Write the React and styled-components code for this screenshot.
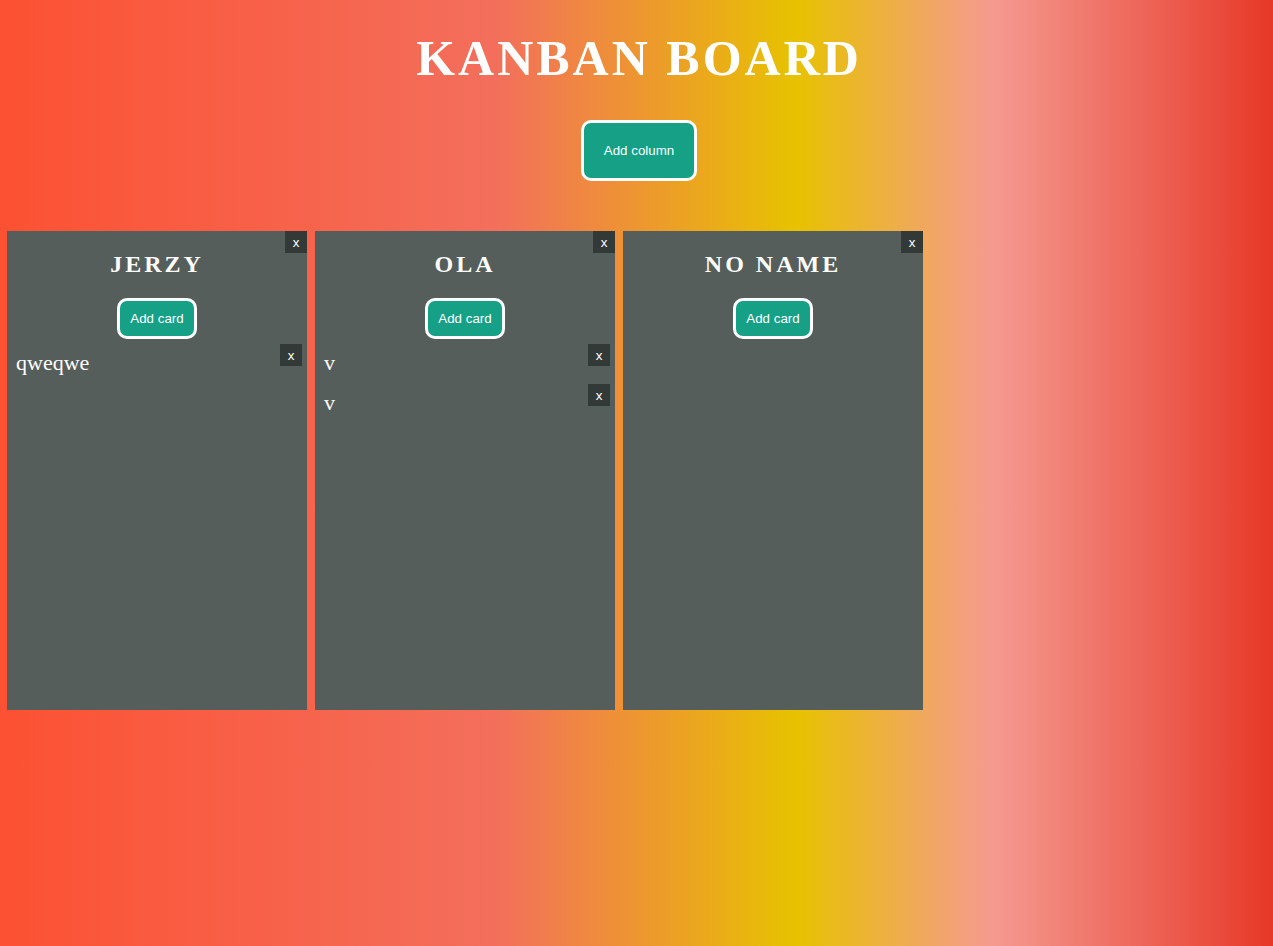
import React, { useState } from "react";
import styled, { createGlobalStyle } from "styled-components";

const GlobalStyle = createGlobalStyle`
  * {
    box-sizing: border-box;
  }

  body {
    margin: 0;
    min-height: 100vh;
    color: #fff;
    font-family: "Liberation Serif", "Times New Roman", serif;
    background: linear-gradient(
      to right,
      #fc5132 0%,
      #f36f5c 39%,
      #e7c200 62.5%,
      #f59a90 78%,
      #e73827 100%
    );
  }
`;

const Header = styled.header`
  display: flex;
  flex-direction: column;
  align-items: center;
  gap: 34px;
  padding: 30px 0 50px 5px;
`;

const Title = styled.h1`
  margin: 0;
  font-size: 50px;
  line-height: 56px;
  letter-spacing: 3px;
  text-transform: uppercase;
`;

const AddButton = styled.button`
  padding: ${({ $large }) => ($large ? "20px" : "10px")};
  border: 3px solid #fff;
  border-radius: 10px;
  background: #16a085;
  color: #fff;
  font-family: "Liberation Sans", Arial, sans-serif;
  cursor: pointer;
`;

const Board = styled.main`
  display: flex;
  flex-wrap: wrap;
  gap: 8px;
  padding: 0 7px;
`;

const ColumnBox = styled.section`
  position: relative;
  display: flex;
  flex-direction: column;
  align-items: center;
  width: 300px;
  min-height: 479px;
  padding: 20px 5px;
  background: #555e5b;
`;

const ColumnTitle = styled.h2`
  margin: 0 0 20px;
  font-size: 24px;
  line-height: 27px;
  letter-spacing: 3px;
  text-transform: uppercase;
`;

const CardList = styled.ul`
  align-self: stretch;
  margin: 5px 0 0;
  padding: 0;
  list-style: none;
`;

const CardItem = styled.li`
  display: flex;
  align-items: flex-start;
  justify-content: space-between;
  min-height: 40px;
  padding-left: 4px;
`;

const CardText = styled.p`
  margin: 0;
  padding: 6px 0;
  font-size: 22px;
  line-height: 26px;
`;

const DeleteButton = styled.button`
  width: 22px;
  height: 22px;
  padding: 0;
  border: 0;
  background: #333937;
  color: #fff;
  font-family: "Liberation Sans", Arial, sans-serif;
  cursor: pointer;
`;

const ColumnDelete = styled(DeleteButton)`
  position: absolute;
  top: 0;
  right: 0;
`;

const initialColumns = [
  { id: 1, name: "Jerzy", cards: [{ id: 1, text: "qweqwe" }] },
  { id: 2, name: "Ola", cards: [{ id: 2, text: "v" }, { id: 3, text: "v" }] },
  { id: 3, name: "No name", cards: [] },
];

function Column({ column, onDelete, onChange }) {
  const addCard = () => {
    const text = window.prompt("Enter the name of the card");
    if (text) onChange([...column.cards, { id: Date.now(), text }]);
  };

  return (
    <ColumnBox>
      <ColumnTitle>{column.name}</ColumnTitle>
      <ColumnDelete type="button" onClick={onDelete}>x</ColumnDelete>
      <AddButton type="button" onClick={addCard}>Add card</AddButton>
      <CardList>
        {column.cards.map((card) => (
          <CardItem key={card.id}>
            <CardText>{card.text}</CardText>
            <DeleteButton
              type="button"
              onClick={() => onChange(column.cards.filter((c) => c.id !== card.id))}
            >
              x
            </DeleteButton>
          </CardItem>
        ))}
      </CardList>
    </ColumnBox>
  );
}

export default function App() {
  const [columns, setColumns] = useState(initialColumns);

  const addColumn = () => {
    const name = window.prompt("Enter a column name") || "No name";
    setColumns([...columns, { id: Date.now(), name, cards: [] }]);
  };

  return (
    <>
      <GlobalStyle />
      <Header>
        <Title>Kanban board</Title>
        <AddButton $large type="button" onClick={addColumn}>Add column</AddButton>
      </Header>
      <Board>
        {columns.map((column) => (
          <Column
            key={column.id}
            column={column}
            onDelete={() => setColumns(columns.filter((c) => c.id !== column.id))}
            onChange={(cards) =>
              setColumns(columns.map((c) => (c.id === column.id ? { ...c, cards } : c)))
            }
          />
        ))}
      </Board>
    </>
  );
}
